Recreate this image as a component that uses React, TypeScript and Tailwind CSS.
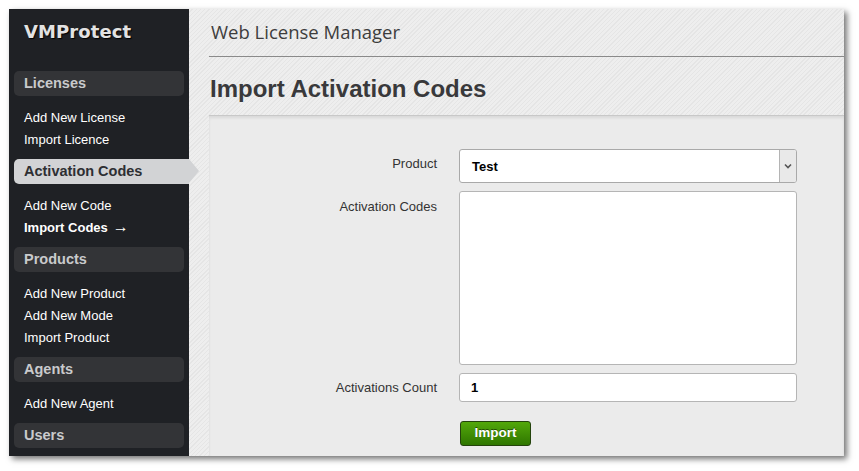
import React from 'react';

const sans = { fontFamily: '"Liberation Sans", Arial, sans-serif' };

interface Section {
    title: string;
    active?: boolean;
    links: { label: string; current?: boolean }[];
}

const sections: Section[] = [
    { title: 'Licenses', links: [{ label: 'Add New License' }, { label: 'Import Licence' }] },
    {
        title: 'Activation Codes',
        active: true,
        links: [{ label: 'Add New Code' }, { label: 'Import Codes', current: true }],
    },
    {
        title: 'Products',
        links: [{ label: 'Add New Product' }, { label: 'Add New Mode' }, { label: 'Import Product' }],
    },
    { title: 'Agents', links: [{ label: 'Add New Agent' }] },
    { title: 'Users', links: [] },
];

function Sidebar() {
    return (
        <aside className="flex w-[180px] shrink-0 flex-col bg-[#1f2125]">
            {/* Logo */}
            <div className="flex h-[62px] items-start pl-[15px] pt-[9px]">
                <span
                    className="text-[18px] font-bold tracking-[0.1px] text-[#e2e2e2] [text-shadow:1px_1px_1px_#000]"
                    style={{ fontFamily: '"DejaVu Sans", sans-serif' }}
                >
                    VMProtect
                </span>
            </div>

            {sections.map((s) => (
                <div key={s.title} className="flex flex-col">
                    {s.active ? (
                        <div className="relative ml-[5px] flex h-[25px] items-center rounded-l-[5px] bg-[#d2d3d5] pl-[10px]">
                            <span className="text-[14.5px] font-bold text-[#2e2f33]" style={sans}>
                                {s.title}
                            </span>
                            <span className="absolute left-full top-0 h-0 w-0 border-y-[12.5px] border-l-[10px] border-y-transparent border-l-[#d2d3d5]" />
                        </div>
                    ) : (
                        <div className="mx-[5px] flex h-[25px] items-center rounded-[5px] bg-[#333437] pl-[10px]">
                            <span className="text-[14.5px] font-bold text-[#c9cacc]" style={sans}>
                                {s.title}
                            </span>
                        </div>
                    )}
                    {s.links.length > 0 && (
                        <ul className="flex flex-col pb-[8px] pl-[15px] pt-[11px]">
                            {s.links.map((l) => (
                                <li
                                    key={l.label}
                                    className={`block h-[22px] text-[13px] leading-[22px] text-white ${l.current ? 'font-bold' : ''}`}
                                    style={sans}
                                >
                                    {l.label}
                                    {l.current && <span className="ml-[5px] text-[16px] font-normal leading-none">→</span>}
                                </li>
                            ))}
                        </ul>
                    )}
                </div>
            ))}
        </aside>
    );
}

function ImportForm() {
    return (
        <div className="flex flex-1 flex-col border-t border-[#c8c8c8] bg-[#ebebeb] pt-[33px] shadow-[inset_0_2px_3px_rgba(0,0,0,0.08)]" style={sans}>
            {/* Product */}
            <div className="flex items-center">
                <label className="w-[228px] pb-[4px] text-right text-[13px] text-[#333]">Product</label>
                <div className="ml-[22px] flex h-[34px] w-[338px] overflow-hidden rounded-[3px] border border-[#a9a9a9] bg-white">
                    <span className="flex flex-1 items-center pl-[12px] pt-[2px] text-[13px] font-bold text-black">Test</span>
                    <span className="flex w-[17px] items-center justify-center border-l border-[#b4b4b4] bg-[#e9e9e9]">
                        <svg width="8" height="6" viewBox="0 0 8 6">
                            <path d="M1 1.5 L4 4.5 L7 1.5" fill="none" stroke="#555" strokeWidth="1.6" />
                        </svg>
                    </span>
                </div>
            </div>

            {/* Codes */}
            <div className="mt-[8px] flex items-start">
                <label className="w-[228px] pt-[6px] text-right text-[13px] text-[#333]">Activation Codes</label>
                <textarea className="ml-[22px] h-[174px] w-[338px] resize-none rounded-[3px] border border-[#b5b5b5] bg-white" />
            </div>

            {/* Count */}
            <div className="mt-[8px] flex items-center">
                <label className="w-[228px] text-right text-[13px] text-[#333]">Activations Count</label>
                <div className="ml-[22px] flex h-[29px] w-[338px] items-center rounded-[3px] border border-[#b5b5b5] bg-white pl-[11px] text-[13px] font-bold text-black">
                    1
                </div>
            </div>

            <div className="mt-[18px] pl-[251px]">
                <button className="h-[25px] w-[71px] rounded-[3px] border border-[#24430c] bg-[linear-gradient(#52a80a,#2f7600)] text-[13.5px] font-bold text-white [text-shadow:0_-1px_0_rgba(0,0,0,0.5)]">
                    Import
                </button>
            </div>
        </div>
    );
}

export default function App() {
    return (
        <div className="h-[471px] w-[859px] overflow-hidden bg-white pl-[9px] pt-[9px]">
            <div className="flex h-[447px] w-[835px] shadow-[3px_3px_6px_rgba(0,0,0,0.55)]">
                <Sidebar />
                <main className="flex flex-1 flex-col bg-[repeating-linear-gradient(135deg,#eeeeee_0px,#eeeeee_2px,#e5e5e5_2px,#e5e5e5_3px)] pl-[20px]">
                    <div className="flex h-[48px] items-center border-b border-[#8a8a8a] pb-[2px] pl-[2px]">
                        <span className="text-[18.5px] text-[#3d3d3d]" style={{ fontFamily: '"Open Sans", sans-serif' }}>
                            Web License Manager
                        </span>
                    </div>
                    <div className="flex h-[58px] items-center pl-[1px] pt-[5px]">
                        <h1 className="text-[24px] font-bold text-[#39393b]" style={sans}>
                            Import Activation Codes
                        </h1>
                    </div>
                    <ImportForm />
                </main>
            </div>
        </div>
    );
}
